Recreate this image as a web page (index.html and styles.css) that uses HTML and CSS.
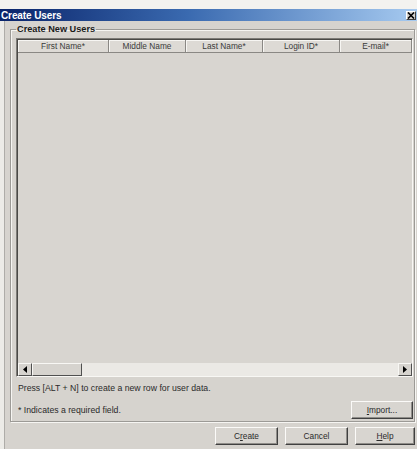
FILE: index.html
```html
<!DOCTYPE html>
<html>
<head>
<meta charset="utf-8">
<title>Create Users</title>
<link rel="stylesheet" href="styles.css">
</head>
<body>
<div class="window">
  <div class="top-edge"></div>
  <div class="titlebar">
    <span class="title">Create Users</span>
    <span class="close"><svg width="8" height="7" viewBox="0 0 8 7"><path d="M1 0.5 L7 6.5 M7 0.5 L1 6.5" stroke="#000" stroke-width="1.6"/></svg></span>
  </div>
  <div class="frame">
    <fieldset class="group">
      <legend>Create New Users</legend>
      <div class="grid">
        <div class="head">
          <div class="col c1">First Name*</div>
          <div class="col c2">Middle Name</div>
          <div class="col c3">Last Name*</div>
          <div class="col c4">Login ID*</div>
          <div class="col c5">E-mail*</div>
        </div>
        <div class="rows"></div>
        <div class="hscroll">
          <div class="sbtn"><svg width="4" height="7" viewBox="0 0 4 7"><path d="M4 0 L0 3.5 L4 7 Z" fill="#000"/></svg></div>
          <div class="thumb"></div>
          <div class="track"></div>
          <div class="sbtn"><svg width="4" height="7" viewBox="0 0 4 7"><path d="M0 0 L4 3.5 L0 7 Z" fill="#000"/></svg></div>
        </div>
      </div>
      <p class="hint">Press [ALT + N] to create a new row for user data.</p>
      <div class="note-row">
        <p class="hint">* Indicates a required field.</p>
        <button class="btn import"><u>I</u>mport...</button>
      </div>
    </fieldset>
    <div class="actions">
      <button class="btn act">C<u>r</u>eate</button>
      <button class="btn act">Cancel</button>
      <button class="btn act help"><u>H</u>elp</button>
    </div>
  </div>
</div>
</body>
</html>
```
FILE: styles.css
```css
* { box-sizing: border-box; }

html, body {
  margin: 0;
  padding: 0;
  background: #d6d3ce;
}

.window {
  width: 417px;
  height: 449px;
  overflow: hidden;
  font-family: "Liberation Sans", Arial, sans-serif;
  font-size: 8px;
  color: #222;
  background: #d6d3ce;
}

.top-edge {
  height: 9px;
  background: #f3f2ef;
}

.titlebar {
  height: 12px;
  display: flex;
  align-items: center;
  justify-content: space-between;
  padding: 0 1px 0 1px;
  background: linear-gradient(to right, #0a246a 0%, #3a6ab0 45%, #a6caf0 100%);
}

.title {
  color: #fff;
  font-weight: bold;
  font-size: 10px;
  letter-spacing: -0.1px;
}

.close {
  width: 10px;
  height: 9px;
  display: flex;
  align-items: center;
  justify-content: center;
  background: #d6d3ce;
  border: 1px solid;
  border-color: #fff #404040 #404040 #fff;
}

.frame {
  height: 428px;
  margin-left: 4px;
  border-left: 1px solid #aeaca8;
  box-shadow: -4px 0 0 #ecebe7;
  padding: 0 2px 0 5px;
  display: flex;
  flex-direction: column;
}

.group {
  margin: 3px 0 0 0;
  padding: 3px 1px 2px 5px;
  border: 1px solid #9c9a96;
  box-shadow: inset 1px 1px 0 #f6f5f2, 1px 1px 0 #f6f5f2;
  min-width: 0;
}

.group legend {
  font-weight: bold;
  font-size: 9.2px;
  line-height: 11px;
  padding: 0 1px;
  margin-left: 0;
  color: #1a1a1a;
}

.grid {
  height: 339px;
  display: flex;
  flex-direction: column;
  border: 1px solid;
  border-color: #7d7b77 #f8f7f4 #f8f7f4 #7d7b77;
  box-shadow: inset 1px 1px 0 #4a4946;
  background: #d8d5d0;
}

.head {
  display: flex;
  height: 13px;
  margin: 1px 0 0 1px;
}

.col {
  display: flex;
  align-items: center;
  justify-content: center;
  background: #dddad5;
  border-right: 1px solid #8a8884;
  border-bottom: 1px solid #8a8884;
  box-shadow: inset 1px 1px 0 #f7f6f3;
  color: #3a3a3a;
  font-size: 8.3px;
}

.c1 { width: 91px; }
.c2 { width: 77px; }
.c3 { width: 77px; }
.c4 { width: 77px; }
.c5 { flex: 1; }

.rows {
  flex: 1;
}

.hscroll {
  height: 13px;
  display: flex;
  margin-left: 1px;
  background: #e9e7e3;
}

.sbtn {
  width: 14px;
  display: flex;
  align-items: center;
  justify-content: center;
  background: #d6d3ce;
  border: 1px solid;
  border-color: #f8f7f4 #505050 #505050 #f8f7f4;
}

.thumb {
  width: 50px;
  background: #d6d3ce;
  border: 1px solid;
  border-color: #f8f7f4 #505050 #505050 #f8f7f4;
}

.track {
  flex: 1;
  background: #ebe9e5;
}

.hint {
  margin: 0;
  padding-left: 2px;
  line-height: 12px;
  font-size: 8.7px;
  color: #2a2a2a;
}

.grid + .hint {
  margin-top: 5px;
}

.note-row {
  margin-top: 7px;
  display: flex;
  align-items: center;
  justify-content: space-between;
}

.btn {
  font-family: "Liberation Sans", Arial, sans-serif;
  font-size: 8.3px;
  color: #2a2a2a;
  background: #d8d5d0;
  border: 1px solid;
  border-color: #fbfaf8 #404040 #404040 #fbfaf8;
  box-shadow: inset -1px -1px 0 #8f8d89;
  padding: 0;
  height: 18px;
}

.btn u {
  text-decoration: underline;
}

.import {
  width: 62px;
  margin-right: 0;
}

.actions {
  margin-top: 5px;
  display: flex;
  justify-content: flex-end;
  gap: 7px;
}

.act {
  width: 63px;
  height: 18px;
}

.help {
  width: 60px;
}
```
